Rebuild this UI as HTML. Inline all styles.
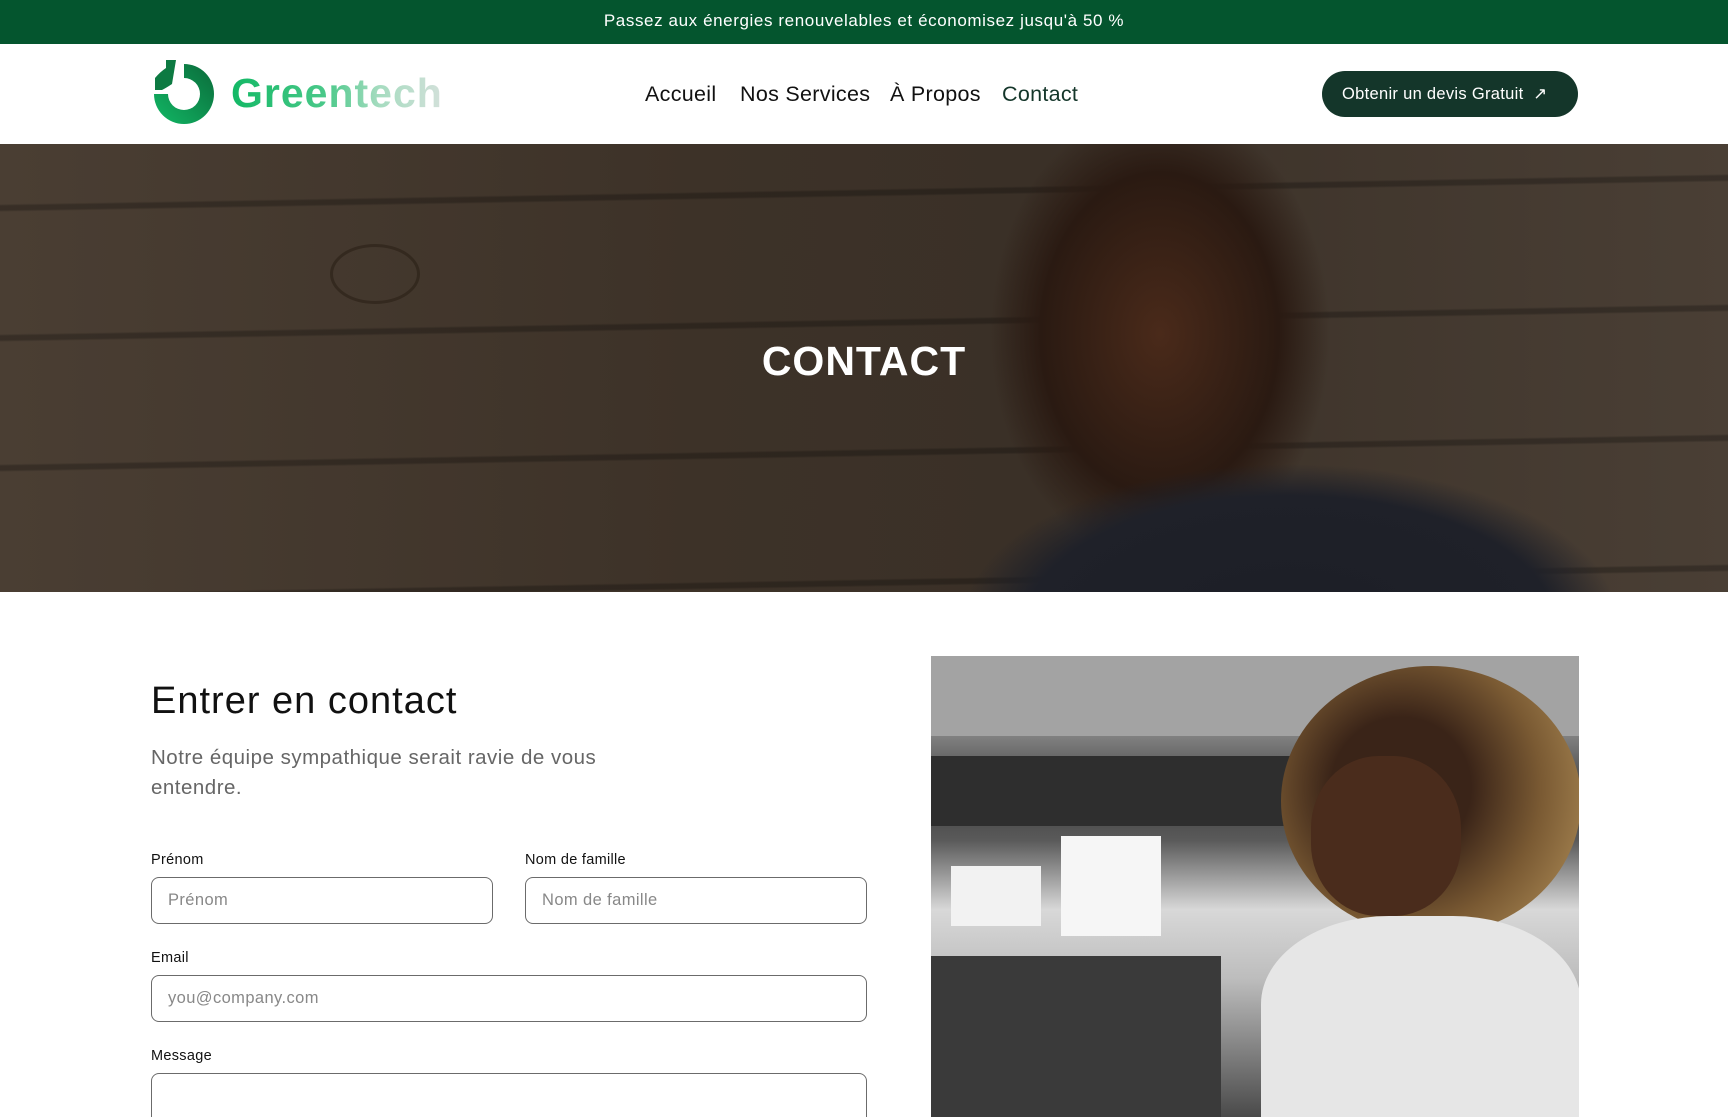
<!DOCTYPE html>
<html><head><meta charset="utf-8"><style>
*{margin:0;padding:0;box-sizing:border-box}
html{width:1728px;height:1117px;overflow:hidden}
body{width:1728px;height:1117px;overflow:hidden;background:#fff;font-family:"Liberation Sans",sans-serif;position:relative;color:#111}
.a{position:absolute}
.top{left:0;top:0;width:1728px;height:44px;background:#04552e;color:#fff;font-size:17px;letter-spacing:.6px;text-align:center;line-height:41px}
.nav{top:82px;font-size:21.5px;letter-spacing:.3px;color:#111}
.btn{left:1322px;top:71px;width:256px;height:46px;border-radius:23px;background:#14362a;color:#fff;font-size:16.5px;letter-spacing:.3px;line-height:46px;padding-left:20px}
.hero{left:0;top:144px;width:1728px;height:448px;overflow:hidden;
background:repeating-linear-gradient(179deg,rgba(0,0,0,0) 0 60px,rgba(0,0,0,.25) 62px 66px,rgba(0,0,0,0) 68px 130px),linear-gradient(90deg,#4a3e33 0%,#3d3228 40%,#3a3027 60%,#4a3f35 100%)}
.lbl{font-size:14.5px;letter-spacing:.3px;color:#111}
.inp{border:1px solid #6b6b6b;border-radius:8px;height:47px;font-size:16.5px;letter-spacing:.4px;color:#888;padding-left:16px;line-height:45px}
</style></head><body>
<div class="a top">Passez aux énergies renouvelables et économisez jusqu'à 50 %</div>
<svg class="a" style="left:148px;top:58px" width="72" height="74" viewBox="0 0 72 74">
<defs><linearGradient id="g" x1="0" y1="1" x2="1" y2="0"><stop offset="0" stop-color="#12b865"/><stop offset="1" stop-color="#0a6a3a"/></linearGradient></defs>
<path d="M36 6 A30 30 0 1 1 6 36 L20 36 A16 16 0 1 0 36 20 Z" fill="url(#g)"/>
<path d="M7 32 L7 20 Q12 14 18 10 L18 2 L28 2 L24 26 Q18 30 14 32 Z" fill="#0d7a42"/>
</svg>
<div class="a" style="left:231px;top:70px;font-size:41px;font-weight:bold;letter-spacing:1px;background:linear-gradient(90deg,#12b865 0%,#4bc98a 45%,#a6dcc0 70%,#d3e0da 100%);-webkit-background-clip:text;color:transparent">Greentech</div>
<div class="a nav" style="left:645px">Accueil</div>
<div class="a nav" style="left:740px">Nos Services</div>
<div class="a nav" style="left:890px">À Propos</div>
<div class="a nav" style="left:1002px;color:#14362a">Contact</div>
<div class="a btn">Obtenir un devis Gratuit&nbsp; ↗</div>
<div class="a hero">
<div class="a" style="left:330px;top:100px;width:90px;height:60px;border-radius:50%;border:3px solid rgba(30,20,10,.4)"></div>
<div class="a" style="left:960px;top:0;width:650px;height:448px;background:radial-gradient(ellipse 170px 230px at 200px 190px,#4a2a1a 0%,#2a1a12 70%,rgba(0,0,0,0) 100%)"></div>
<div class="a" style="left:960px;top:300px;width:650px;height:160px;background:radial-gradient(ellipse 330px 160px at 330px 180px,#1c1e26 0%,#1f2129 80%,rgba(0,0,0,0) 100%)"></div>
<div class="a" style="left:0;top:194px;width:1728px;text-align:center;font-size:41px;font-weight:bold;color:#fff;letter-spacing:1px">CONTACT</div>
</div>
<div class="a" style="left:151px;top:680px;font-size:38px;letter-spacing:1px;color:#111">Entrer en contact</div>
<div class="a" style="left:151px;top:743px;width:490px;font-size:20.5px;letter-spacing:.5px;line-height:30px;color:#666">Notre équipe sympathique serait ravie de vous entendre.</div>
<div class="a lbl" style="left:151px;top:852px">Prénom</div>
<div class="a lbl" style="left:525px;top:852px">Nom de famille</div>
<div class="a inp" style="left:151px;top:877px;width:342px">Prénom</div>
<div class="a inp" style="left:525px;top:877px;width:342px">Nom de famille</div>
<div class="a lbl" style="left:151px;top:950px">Email</div>
<div class="a inp" style="left:151px;top:975px;width:716px">you@company.com</div>
<div class="a lbl" style="left:151px;top:1048px">Message</div>
<div class="a" style="left:151px;top:1073px;width:716px;height:44px;overflow:hidden"><div class="inp" style="width:716px;height:80px"></div></div>
<div class="a" style="left:931px;top:656px;width:648px;height:461px;overflow:hidden;background:linear-gradient(180deg,#a9a9a9 0%,#8d8d8d 15%,#3e3e3e 30%,#5a5a5a 40%,#d8d8d8 55%,#bdbdbd 70%,#4a4a4a 100%)">
<div class="a" style="left:0;top:0;width:648px;height:80px;background:#a3a3a3"></div>
<div class="a" style="left:0;top:100px;width:360px;height:70px;background:#2e2e2e"></div>
<div class="a" style="left:20px;top:210px;width:90px;height:60px;background:#f2f2f2"></div>
<div class="a" style="left:130px;top:180px;width:100px;height:100px;background:#f6f6f6"></div>
<div class="a" style="left:0;top:300px;width:290px;height:161px;background:#3a3a3a"></div>
<div class="a" style="left:350px;top:10px;width:300px;height:270px;border-radius:50%;background:radial-gradient(circle at 40% 45%,#3a2418 30%,#7a5a33 60%,#9b7a4a 80%)"></div>
<div class="a" style="left:380px;top:100px;width:150px;height:160px;border-radius:45%;background:#4a2c1c"></div>
<div class="a" style="left:330px;top:260px;width:320px;height:220px;border-radius:40% 40% 0 0;background:#e6e6e6"></div>
</div>
</body></html>
